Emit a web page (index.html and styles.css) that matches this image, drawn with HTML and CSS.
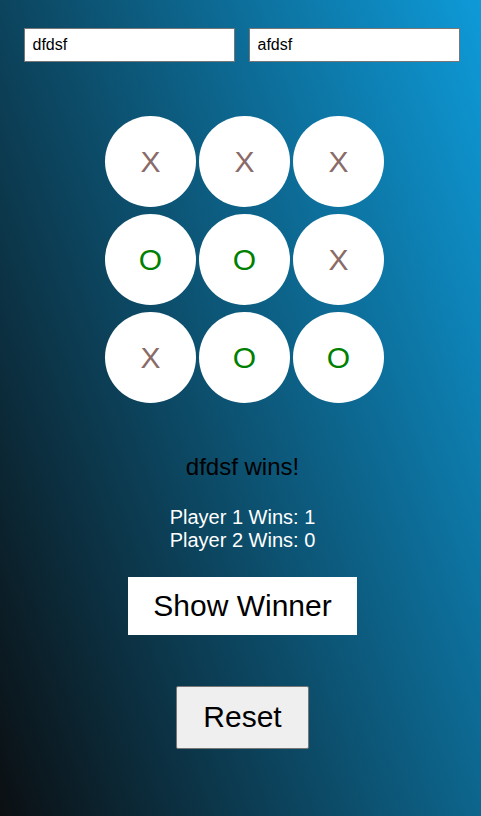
FILE: index.html
```html
<!DOCTYPE html>
<html lang="en">
<head>
<meta charset="utf-8">
<title>Tic Tac Toe</title>
<link rel="stylesheet" href="styles.css">
</head>
<body>
<main class="app">
  <div class="players">
    <input class="player-input" type="text" value="dfdsf">
    <input class="player-input" type="text" value="afdsf">
  </div>
  <div class="board">
    <div class="cell x">X</div>
    <div class="cell x">X</div>
    <div class="cell x">X</div>
    <div class="cell o">O</div>
    <div class="cell o">O</div>
    <div class="cell x">X</div>
    <div class="cell x">X</div>
    <div class="cell o">O</div>
    <div class="cell o">O</div>
  </div>
  <div class="status">dfdsf wins!</div>
  <div class="scores">
    <div>Player 1 Wins: 1</div>
    <div>Player 2 Wins: 0</div>
  </div>
  <button class="btn-winner" type="button">Show Winner</button>
  <button class="btn-reset" type="button">Reset</button>
</main>
</body>
</html>
```
FILE: styles.css
```css
html, body {
  margin: 0;
  padding: 0;
  height: 100%;
}
body {
  background: linear-gradient(70deg, #0b0f12 0%, #0e9ad8 100%);
  font-family: "Liberation Sans", Arial, sans-serif;
  min-height: 816px;
}
.app {
  display: flex;
  flex-direction: column;
  align-items: center;
  padding: 28px 0 0 4px;
}
.players {
  display: flex;
  gap: 14px;
  margin-left: -2px;
}
.player-input {
  box-sizing: border-box;
  width: 211px;
  height: 34px;
  margin: 0;
  padding: 0 8px;
  border: 1px solid #767676;
  background: #fff;
  font-family: "Liberation Sans", Arial, sans-serif;
  font-size: 16px;
  color: #000;
}
.board {
  display: grid;
  grid-template-columns: repeat(3, 91px);
  grid-auto-rows: 91px;
  column-gap: 3px;
  row-gap: 7px;
  margin: 54px 0 0 4px;
}
.cell {
  display: flex;
  align-items: center;
  justify-content: center;
  background: #fff;
  border-radius: 50%;
  font-size: 30px;
}
.cell.x { color: #8a6b68; }
.cell.o { color: #008000; }
.status {
  margin-top: 50px;
  font-size: 24px;
  color: #000;
}
.scores {
  margin-top: 25px;
  font-size: 20px;
  line-height: 23px;
  color: #fff;
  text-align: center;
}
.btn-winner {
  margin-top: 25px;
  padding: 12px 25px;
  border: none;
  background: #fff;
  color: #000;
  font-family: "Liberation Sans", Arial, sans-serif;
  font-size: 30px;
  line-height: 34px;
}
.btn-reset {
  margin-top: 51px;
  padding: 13px 26px 14px;
  border: 1px solid #767676;
  border-radius: 2px;
  background: #efefef;
  color: #000;
  font-family: "Liberation Sans", Arial, sans-serif;
  font-size: 30px;
  line-height: 34px;
}
```
